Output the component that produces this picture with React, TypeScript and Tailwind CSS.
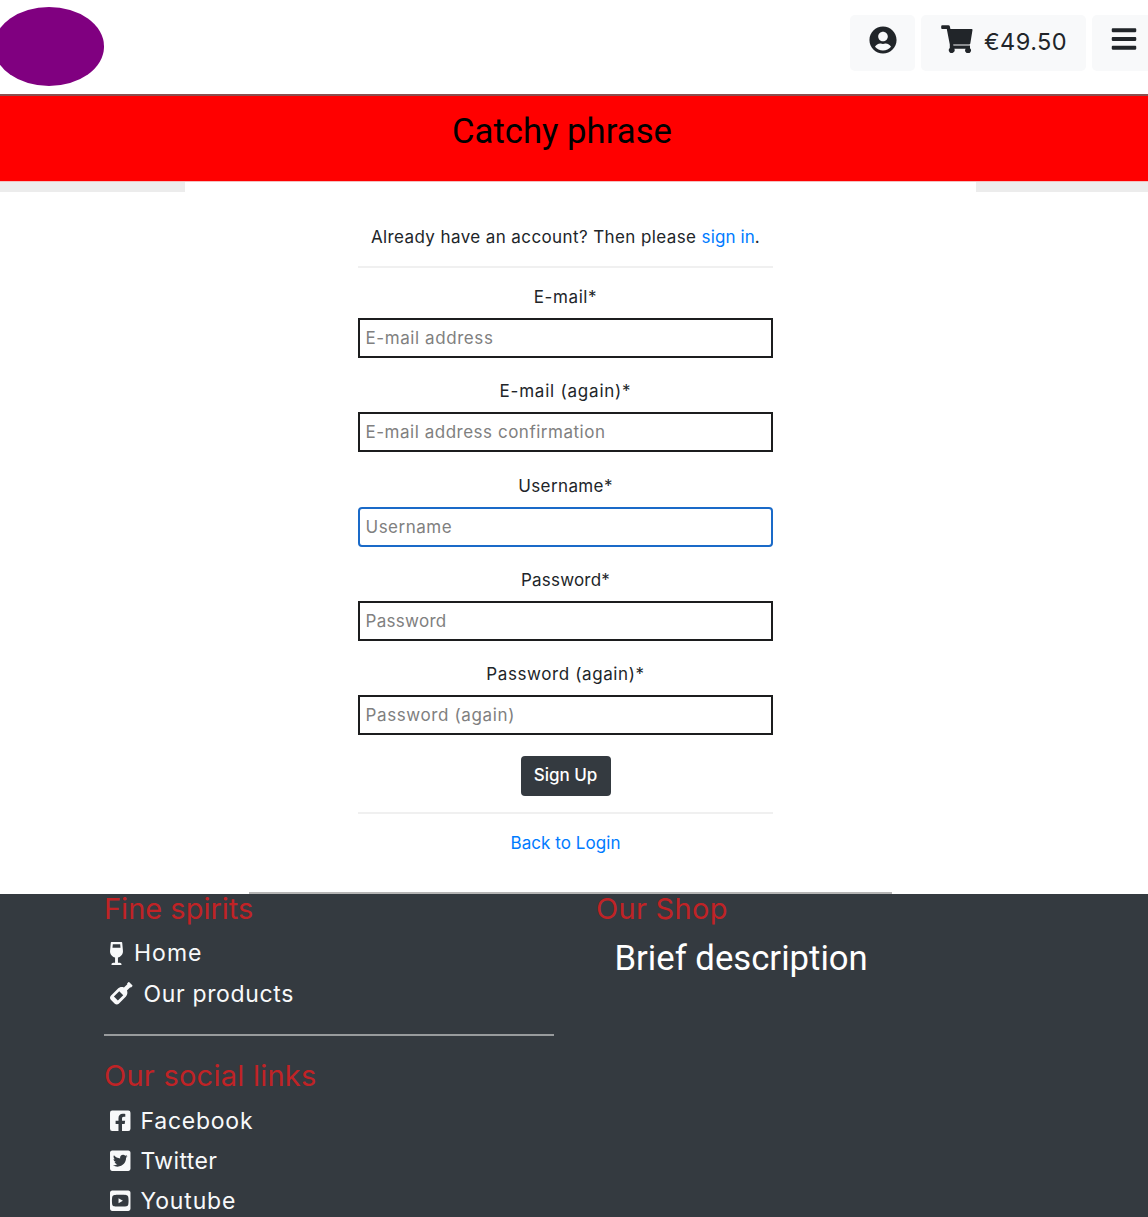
import type { ReactNode } from "react";
import { FaUserCircle, FaBars, FaWineGlassAlt, FaWineBottle, FaFacebookSquare, FaTwitterSquare, FaYoutubeSquare } from "react-icons/fa";

const fields = [
  { label: "E-mail*", hint: "E-mail address", labelTracking: "tracking-[0.6px]", hintTracking: "tracking-[0.58px]" },
  { label: "E-mail (again)*", hint: "E-mail address confirmation", labelTracking: "tracking-[0.78px]", hintTracking: "tracking-[0.52px]" },
  { label: "Username*", hint: "Username", labelTracking: "tracking-[0.4px]", hintTracking: "tracking-[0.5px]", focused: true },
  { label: "Password*", hint: "Password", labelTracking: "tracking-[0.22px]", hintTracking: "tracking-[0.3px]" },
  { label: "Password (again)*", hint: "Password (again)", labelTracking: "tracking-[0.6px]", hintTracking: "tracking-[0.62px]" },
];

function CartIcon() {
  return (
    <svg className="shrink-0" width="32" height="28" viewBox="0 0 32 28" fill="currentColor">
      <path d="M1.2 0.2H7.4Q8.6 0.2 8.9 1.4L9.4 4H30.6Q31.7 4 31.5 5L29.3 18.6Q29.1 19.5 28.2 19.5H12.2L12.4 20.6H29V23.2A2.9 2.9 0 1 1 24.6 23.8H13.3A2.9 2.9 0 1 1 8.8 23V19.5L5.8 4H1.2Q0.2 4 0.2 3V1.2Q0.2 0.2 1.2 0.2Z" />
    </svg>
  );
}

function FooterLink({ icon, gap, tracking, children }: { icon: ReactNode; gap: string; tracking: string; children: ReactNode }) {
  return (
    <a className={`flex h-[40.2px] items-center pl-[6px] text-[23px] text-[#f8f9fa] ${gap}`}>
      {icon}
      <span className={`whitespace-nowrap pt-px ${tracking}`}>{children}</span>
    </a>
  );
}

export default function App() {
  return (
    <div className="flex h-[1217px] w-full flex-col overflow-hidden bg-white font-['Inter',sans-serif] text-[#212529]">
      <header className="flex h-[94px] shrink-0 justify-between">
        <div className="mt-[7px] -ml-[6px] h-[78.5px] w-[110.3px] rounded-[50%] bg-[#800080]" />
        <nav className="mt-[15px] -mr-[8px] flex h-[56px] gap-[6px]">
          <button className="flex w-[65px] items-start justify-center rounded-[5px] bg-[#f8f9fa] pt-[11px]">
            <FaUserCircle size={28} />
          </button>
          <button className="flex w-[165px] items-start rounded-[5px] bg-[#f8f9fa] pt-[10px] pl-[20px]">
            <CartIcon />
            <span className="ml-[11px] text-[23.5px] leading-[34px] tracking-[0.45px]">€49.50</span>
          </button>
          <button className="flex w-[64px] items-start rounded-[5px] bg-[#f8f9fa] pt-[10px] pl-[18px]">
            <FaBars size={28} />
          </button>
        </nav>
      </header>

      <div className="flex h-[88px] shrink-0 justify-center border-t-2 border-b border-t-[#8a5050] border-b-[#f3c0c0] bg-[#ff0000] pt-[13px] pr-[24px] font-['Roboto',sans-serif] text-[34.7px] leading-[45px] text-black">
        <span>Catchy phrase</span>
      </div>
      <div className="flex h-[10px] shrink-0 justify-between">
        <div className="w-[185px] bg-[#ececec]" />
        <div className="w-[172px] bg-[#ececec]" />
      </div>

      <main className="ml-[358px] flex h-[702px] w-[415px] shrink-0 flex-col text-center text-[17px] leading-[26px]">
        <p className="mt-[32px] self-center whitespace-nowrap tracking-[0.4px]">
          Already have an account? Then please <a className="tracking-[0.1px] text-[#007bff]">sign in</a>.
        </p>
        <hr className="mt-[15.5px] border-t-2 border-[#f0f0f0]" />
        <form className="mt-[16.5px] flex flex-col">
          {fields.map((f) => (
            <label key={f.label} className="flex h-[94.25px] flex-col">
              <span className={f.labelTracking}>{f.label}</span>
              <input
                placeholder={f.hint}
                className={`mt-[8px] h-[40px] w-full border-2 pl-[5.5px] placeholder:text-[#808080] ${f.hintTracking} ${f.focused ? "rounded-[4px] border-[#1a6ac8]" : "border-[#1c1d1e]"}`}
              />
            </label>
          ))}
          <button className="mt-[0.5px] h-[40px] w-[90px] self-center rounded-[4px] bg-[#343a40] pb-px font-medium tracking-[-0.05px] text-white">Sign Up</button>
        </form>
        <hr className="mt-[16px] border-t-2 border-[#f0f0f0]" />
        <a className="mt-[16px] tracking-[0.06px] text-[#007bff]">Back to Login</a>
      </main>

      <footer className="flex min-h-0 grow flex-col bg-[#343a40]">
        <div className="-mt-[2px] ml-[249px] h-[2px] w-[643px] shrink-0 bg-[#b5b5b5]" />
        <div className="flex">
          <section className="ml-[104px] flex w-[450px] flex-col">
            <h5 className="-mt-[3px] text-[29px] leading-[36px] text-[#c02326]">Fine spirits</h5>
            <div className="mt-[6px]">
              <FooterLink gap="gap-[11px]" tracking="tracking-[1px]" icon={<FaWineGlassAlt className="h-[23px] w-[13px]" />}>Home</FooterLink>
              <FooterLink gap="gap-[11px]" tracking="tracking-[0.65px]" icon={<FaWineBottle size={22.5} />}>Our products</FooterLink>
            </div>
            <hr className="mt-[21px] border-t-2 border-[#989b9d]" />
            <h5 className="mt-[22px] text-[29px] leading-[36px] tracking-[0.25px] text-[#c02326]">Our social links</h5>
            <div className="mt-[6px]">
              <FooterLink gap="gap-[10px]" tracking="tracking-[0.75px]" icon={<FaFacebookSquare className="h-[23.4px] w-[20.5px]" />}>Facebook</FooterLink>
              <FooterLink gap="gap-[10px]" tracking="tracking-[0.4px]" icon={<FaTwitterSquare className="h-[23.4px] w-[20.5px]" />}>Twitter</FooterLink>
              <FooterLink gap="gap-[10px]" tracking="tracking-[0.85px]" icon={<FaYoutubeSquare className="h-[23.4px] w-[20.5px]" />}>Youtube</FooterLink>
            </div>
          </section>
          <section className="ml-[42px]">
            <h5 className="-mt-[3px] text-[29px] leading-[36px] tracking-[0.3px] text-[#c02326]">Our Shop</h5>
            <p className="mt-[9px] ml-[18.5px] font-['Roboto',sans-serif] text-[34.7px] leading-[45px] text-white">Brief description</p>
          </section>
        </div>
      </footer>
    </div>
  );
}
